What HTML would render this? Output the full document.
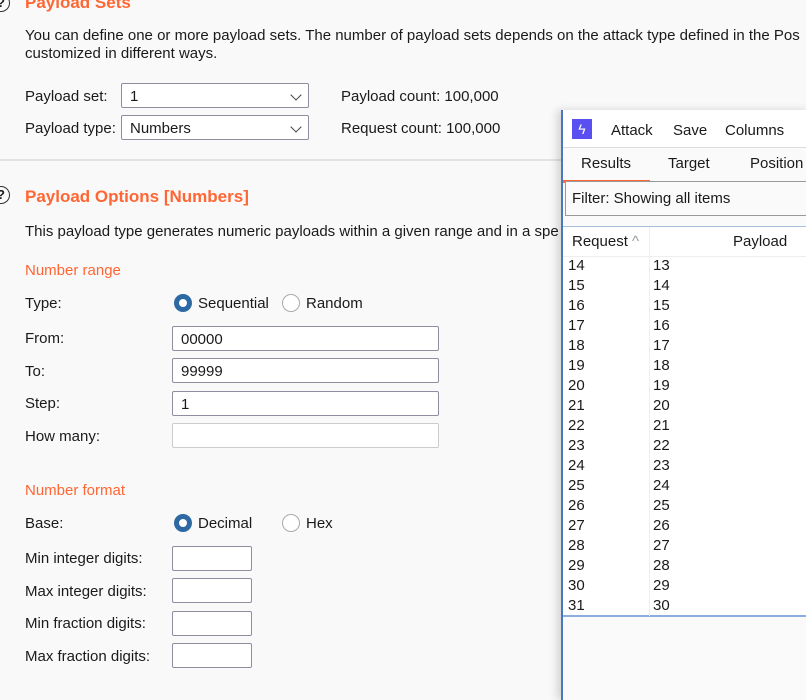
<!DOCTYPE html>
<html><head><meta charset="utf-8"><style>
*{margin:0;padding:0;box-sizing:border-box}
body{width:806px;height:697px;overflow:hidden;background:#f9f9f9;font-family:"Liberation Sans",sans-serif;font-size:15px;color:#1a1a1a;position:relative}
.a{position:absolute;white-space:nowrap;line-height:18px}
.o{color:#ff6633;font-weight:bold;font-size:17px}
.s{color:#ff6633}
.in{position:absolute;background:#fff;border:1px solid #8e8ea0;height:25px;padding:4px 8px;line-height:17px;border-radius:2px}
.ch{position:absolute;right:8px;top:7px;width:8px;height:8px;border-right:1.3px solid #444;border-bottom:1.3px solid #444;transform:rotate(45deg)}
.rad{position:absolute;width:18px;height:18px;border-radius:50%}
.on{border:5px solid #2d6aa3;background:#fff}
.off{border:1px solid #aaa;background:#fff}
.q{position:absolute;width:18px;height:18px;border:1.5px solid #333;border-radius:50%;font-size:13px;font-weight:bold;text-align:center;line-height:15px}
#w{position:absolute;left:561px;top:110px;width:250px;height:590px;background:#fafafa;border-left:2px solid #4a78c0;box-shadow:-4px 0 8px rgba(0,0,0,.15)}
.r{position:absolute;left:5px;line-height:22px}
.r2{position:absolute;left:90px;line-height:22px}
</style></head><body>
<div class="q" style="left:-8px;top:-6px">?</div>
<div class="a o" style="left:25px;top:-6px">Payload Sets</div>
<div class="a" style="left:25px;top:27px">You can define one or more payload sets. The number of payload sets depends on the attack type defined in the Pos</div>
<div class="a" style="left:25px;top:45px">customized in different ways.</div>
<div class="a" style="left:25px;top:88px">Payload set:</div>
<div class="in" style="left:121px;top:83px;width:188px">1<div class="ch"></div></div>
<div class="a" style="left:341px;top:88px">Payload count: 100,000</div>
<div class="a" style="left:25px;top:120px">Payload type:</div>
<div class="in" style="left:121px;top:115px;width:188px">Numbers<div class="ch"></div></div>
<div class="a" style="left:341px;top:120px">Request count: 100,000</div>
<div style="position:absolute;left:0;top:159px;width:806px;height:2px;background:#e2e2e2"></div>
<div class="q" style="left:-8px;top:186px">?</div>
<div class="a o" style="left:25px;top:188px">Payload Options [Numbers]</div>
<div class="a" style="left:25px;top:223px">This payload type generates numeric payloads within a given range and in a spe</div>
<div class="a s" style="left:25px;top:262px">Number range</div>
<div class="a" style="left:25px;top:295px">Type:</div>
<div class="rad on" style="left:174px;top:294px"></div><div class="a" style="left:198px;top:295px">Sequential</div>
<div class="rad off" style="left:282px;top:294px"></div><div class="a" style="left:306px;top:295px">Random</div>
<div class="a" style="left:25px;top:330px">From:</div><div class="in" style="left:172px;top:326px;width:267px">00000</div>
<div class="a" style="left:25px;top:363px">To:</div><div class="in" style="left:172px;top:358px;width:267px">99999</div>
<div class="a" style="left:25px;top:395px">Step:</div><div class="in" style="left:172px;top:391px;width:267px">1</div>
<div class="a" style="left:25px;top:428px">How many:</div><div class="in" style="left:172px;top:423px;width:267px;border-color:#ccc"></div>
<div class="a s" style="left:25px;top:482px">Number format</div>
<div class="a" style="left:25px;top:515px">Base:</div>
<div class="rad on" style="left:174px;top:514px"></div><div class="a" style="left:198px;top:515px">Decimal</div>
<div class="rad off" style="left:282px;top:514px"></div><div class="a" style="left:306px;top:515px">Hex</div>
<div class="a" style="left:25px;top:550px">Min integer digits:</div><div class="in" style="left:172px;top:546px;width:80px"></div>
<div class="a" style="left:25px;top:583px">Max integer digits:</div><div class="in" style="left:172px;top:578px;width:80px"></div>
<div class="a" style="left:25px;top:615px">Min fraction digits:</div><div class="in" style="left:172px;top:611px;width:80px"></div>
<div class="a" style="left:25px;top:648px">Max fraction digits:</div><div class="in" style="left:172px;top:643px;width:80px"></div>

<div id="w">
 <div style="position:absolute;left:0;top:0;width:250px;height:38px;background:#fff;border-bottom:1px solid #ddd"></div>
 <div style="position:absolute;left:9px;top:9px;width:20px;height:20px;background:#5a4ff0;color:#fff;text-align:center;font-size:14px;line-height:20px">ϟ</div>
 <div class="a" style="left:48px;top:12px">Attack</div>
 <div class="a" style="left:110px;top:12px">Save</div>
 <div class="a" style="left:162px;top:12px">Columns</div>
 <div class="a" style="left:18px;top:45px">Results</div>
 <div class="a" style="left:105px;top:45px">Target</div>
 <div class="a" style="left:187px;top:45px">Position</div>
 <div style="position:absolute;left:0;top:70px;width:87px;height:3px;background:#ff6633"></div>
 <div style="position:absolute;left:2px;top:71px;width:250px;height:35px;border:1px solid #999;background:#fafafa"></div>
 <div class="a" style="left:9px;top:80px">Filter: Showing all items</div>
 <div style="position:absolute;left:0;top:116px;width:250px;height:391px;background:#fff;border-top:1px solid #a8c0e0;border-bottom:2px solid #8aaee0"></div>
 <div style="position:absolute;left:86px;top:117px;width:1px;height:389px;background:#eee"></div>
 <div style="position:absolute;left:0;top:146px;width:250px;height:1px;background:#eee"></div>
 <div class="a" style="left:9px;top:123px">Request <span style="color:#999">^</span></div>
 <div class="a" style="left:170px;top:123px">Payload</div>
 <div style="position:absolute;left:0;top:145px">
 <div class="r" style="top:0">14</div><div class="r2" style="top:0">13</div>
 <div class="r" style="top:20px">15</div><div class="r2" style="top:20px">14</div>
 <div class="r" style="top:40px">16</div><div class="r2" style="top:40px">15</div>
 <div class="r" style="top:60px">17</div><div class="r2" style="top:60px">16</div>
 <div class="r" style="top:80px">18</div><div class="r2" style="top:80px">17</div>
 <div class="r" style="top:100px">19</div><div class="r2" style="top:100px">18</div>
 <div class="r" style="top:120px">20</div><div class="r2" style="top:120px">19</div>
 <div class="r" style="top:140px">21</div><div class="r2" style="top:140px">20</div>
 <div class="r" style="top:160px">22</div><div class="r2" style="top:160px">21</div>
 <div class="r" style="top:180px">23</div><div class="r2" style="top:180px">22</div>
 <div class="r" style="top:200px">24</div><div class="r2" style="top:200px">23</div>
 <div class="r" style="top:220px">25</div><div class="r2" style="top:220px">24</div>
 <div class="r" style="top:240px">26</div><div class="r2" style="top:240px">25</div>
 <div class="r" style="top:260px">27</div><div class="r2" style="top:260px">26</div>
 <div class="r" style="top:280px">28</div><div class="r2" style="top:280px">27</div>
 <div class="r" style="top:300px">29</div><div class="r2" style="top:300px">28</div>
 <div class="r" style="top:320px">30</div><div class="r2" style="top:320px">29</div>
 <div class="r" style="top:340px">31</div><div class="r2" style="top:340px">30</div>
 </div>
</div>
</body></html>
